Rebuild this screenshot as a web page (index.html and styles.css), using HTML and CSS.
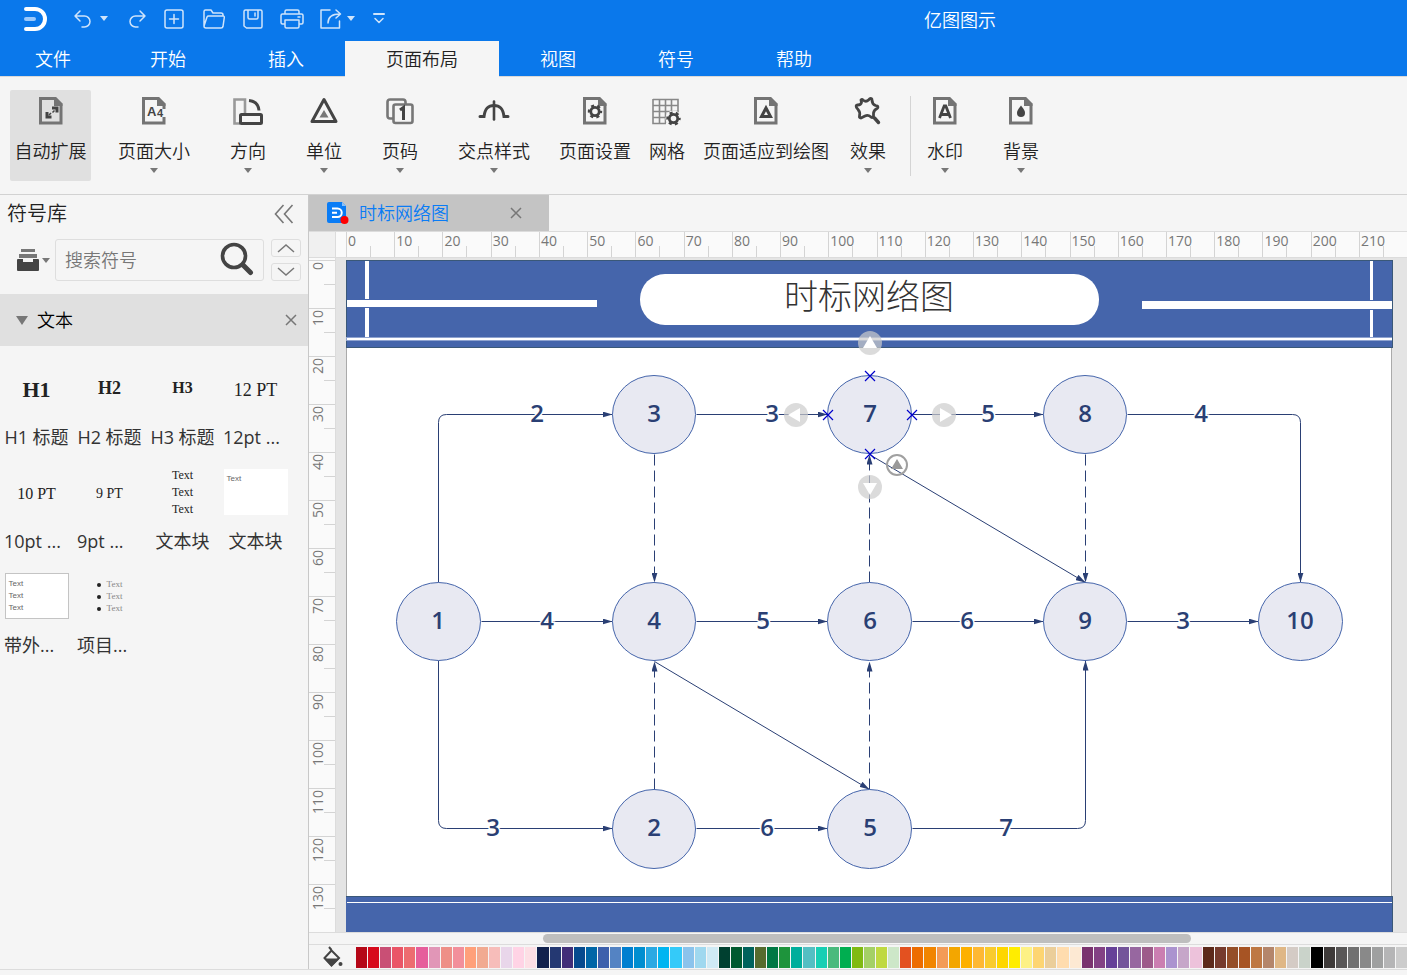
FILE: index.html
```html
<!DOCTYPE html>
<html lang="zh-CN">
<head>
    <meta charset="UTF-8">
    <meta name="viewport" content="width=device-width, initial-scale=1.0">
    <title>亿图图示</title>
    <link rel="stylesheet" href="styles.css">
</head>
<body>
    <header class="titlebar">
        <div class="quickbar">
            <svg class="logo" width="24" height="26" viewBox="0 0 24 26" fill="none" stroke-linecap="round">
                <path d="M2 3h9a10 10 0 0 1 0 20H2" stroke="#fff" stroke-width="4"/>
                <path d="M2 13h8" stroke="#9cc9fb" stroke-width="4"/>
            </svg>
            <button class="quick undo" aria-label="撤销"><svg width="20" height="22" viewBox="0 0 20 22"><path d="M7 3 2 8l5 5M2 8h9.500a5.500 5.500 0 0 1 0 11H9"/></svg></button>
            <button class="quick drop" aria-label="撤销列表"><i class="caret"></i></button>
            <button class="quick redo" aria-label="重做"><svg width="20" height="22" viewBox="0 0 20 22"><path d="M13 3l5 5-5 5M18 8H8.500a5.500 5.500 0 0 0 0 11H11"/></svg></button>
            <button class="quick new" aria-label="新建"><svg width="22" height="22" viewBox="0 0 22 22"><rect x="2" y="2" width="18" height="18" rx="2"/><path d="M11 6.500v9M6.500 11h9"/></svg></button>
            <button class="quick open" aria-label="打开"><svg width="24" height="22" viewBox="0 0 24 22"><path d="M2 18V3.500Q2 2 3.500 2H9l2 3h8q2 0 2 2v1M2 18 5 9q.5-1 1.500-1H21q1.500 0 1.300 1.500L21 18.500Q20.700 20 19 20H4q-2 0-2-2z"/></svg></button>
            <button class="quick save" aria-label="保存"><svg width="22" height="22" viewBox="0 0 22 22"><path d="M3.500 2h15Q20 2 20 3.500v15q0 1.500-1.500 1.500h-14L2 18V3.500Q2 2 3.500 2zM6 2v7.500q0 1.500 1.500 1.500h7q1.500 0 1.500-1.500V2M13 5v3"/></svg></button>
            <button class="quick print" aria-label="打印"><svg width="26" height="22" viewBox="0 0 26 22"><path d="M6 6V3.500Q6 2 7.500 2h11Q20 2 20 3.500V6M6 16H3.500Q2 16 2 14.500v-7Q2 6 3.500 6h19Q24 6 24 7.500v7q0 1.500-1.500 1.500H20M6 12h14v6.500q0 1.500-1.500 1.500h-11Q6 20 6 18.500zM19 9h2"/></svg></button>
            <button class="quick export" aria-label="导出"><svg width="22" height="22" viewBox="0 0 22 22"><path d="M10 2H1v18h18.500v-7M8 15c0-6 4-9 12-9M16 2l4.500 4L16 10"/></svg></button>
            <button class="quick drop" aria-label="导出列表"><i class="caret"></i></button>
            <button class="quick more" aria-label="更多"><svg width="12" height="14" viewBox="0 0 12 14"><path d="M1 2h10" stroke-width="2"/><path d="M2 6.500l4 4 4-4"/></svg></button>
        </div>
        <h1 class="app-title">亿图图示</h1>
    </header>

    <nav class="tabs">
        <a class="tab first" href="#">文件</a>
        <a class="tab" href="#">开始</a>
        <a class="tab" href="#">插入</a>
        <a class="tab active" href="#">页面布局</a>
        <a class="tab" href="#">视图</a>
        <a class="tab" href="#">符号</a>
        <a class="tab" href="#">帮助</a>
    </nav>

    <!-- shared shapes for the ribbon icons -->
    <svg class="defs" width="0" height="0">
        <defs>
            <g id="sheet">
                <path d="M5.500 3.500H20l6 6v18.500H5.500z" fill="none" stroke="#747474" stroke-width="3"/>
                <path d="M19 2h2l6.500 6.500V11H19z" fill="#747474"/>
            </g>
            <g id="gear" fill="none" stroke="#444">
                <circle r="4.200" stroke-width="2.800"/>
                <circle r="6" stroke-width="2.400" stroke-dasharray="3 3.280" stroke-dashoffset="1.500"/>
            </g>
        </defs>
    </svg>

    <div class="ribbon">
        <button class="tool selected">
            <svg width="32" height="32" viewBox="0 0 32 32"><use href="#sheet"/><path d="M17 13h5v4.500M12 17v5h4.500" fill="none" stroke="#444" stroke-width="3"/><path d="M19.500 15.500l-2 2M14 20l2-2" stroke="#444" stroke-width="1.500"/></svg>
            <span>自动扩展</span>
        </button>
        <button class="tool drop">
            <svg width="32" height="32" viewBox="0 0 32 32"><use href="#sheet"/><rect x="23" y="14" width="5" height="8" fill="#f5f5f5"/><text class="icon-text" x="9" y="21">A</text><text class="icon-text small" x="19" y="22">4</text></svg>
            <span>页面大小</span><i class="caret"></i>
        </button>
        <button class="tool drop">
            <svg width="32" height="32" viewBox="0 0 32 32" fill="none"><path d="M8 28.500H2.500v-24H13V19" stroke="#999" stroke-width="2.600"/><rect x="8.500" y="19.500" width="21" height="9" stroke="#444" stroke-width="3" rx="1"/><path d="M17 5.500c6 .5 9.500 4 10 10" stroke="#444" stroke-width="3"/></svg>
            <span>方向</span><i class="caret"></i>
        </button>
        <button class="tool drop">
            <svg width="32" height="32" viewBox="0 0 32 32"><path d="M16 4.500 28 26.500H4z" fill="none" stroke="#444" stroke-width="3" stroke-linejoin="round"/><path d="M16 15l4.500 7.500h-9z" fill="#777"/></svg>
            <span>单位</span><i class="caret"></i>
        </button>
        <button class="tool drop">
            <svg width="32" height="32" viewBox="0 0 32 32" fill="none" stroke="#777" stroke-width="2.600"><path d="M9 23.500H6q-2.500 0-2.500-2.500V7Q3.500 4.500 6 4.500h13q2.500 0 2.500 2.500v2"/><rect x="9.500" y="9.500" width="19" height="18.500" rx="2"/><path d="M16 15l3.500-2.500V25" stroke="#444" stroke-width="3"/></svg>
            <span>页码</span><i class="caret"></i>
        </button>
        <button class="tool drop">
            <svg width="32" height="32" viewBox="0 0 32 32" fill="none" stroke="#444" stroke-width="3" stroke-linecap="round"><path d="M2 21.500h4c1-8 4-11 10-11s9 3 10 11h4"/><path d="M16 6.500v18" stroke-width="2.600"/></svg>
            <span>交点样式</span><i class="caret"></i>
        </button>
        <button class="tool">
            <svg width="32" height="32" viewBox="0 0 32 32"><use href="#sheet"/><use href="#gear" x="16" y="16.500"/></svg>
            <span>页面设置</span>
        </button>
        <button class="tool">
            <svg width="32" height="32" viewBox="0 0 32 32"><path d="M2 4.500h25v14M2 4v24.500h13M2 10.500h25M2 16.500h25M2 22.500h13M8.500 4v24M14.500 4v24M20.500 4v13" fill="none" stroke="#888" stroke-width="1.600"/><circle cx="22.500" cy="23.500" r="8" fill="#f5f5f5"/><use href="#gear" x="22.500" y="23.500"/></svg>
            <span>网格</span>
        </button>
        <button class="tool">
            <svg width="32" height="32" viewBox="0 0 32 32"><use href="#sheet"/><path d="M16 13l4.500 8.500h-9z" fill="none" stroke="#444" stroke-width="3"/></svg>
            <span>页面适应到绘图</span>
        </button>
        <button class="tool drop narrow">
            <svg width="32" height="32" viewBox="0 0 32 32" fill="none" stroke="#444" stroke-width="2.800" stroke-linejoin="round" stroke-linecap="round"><path d="M9 5q1-1 2 0 3 2.500 5.500 0L18 3.500q2-.5 2 1.500 0 4 3.500 5.500l2 .500q1 1.500-.5 2.500-3 1.500-3.500 4.500v3.500q-1 1.500-2.500.5-3-2.500-6-1l-4 2q-2 0-1.500-2 1-4-1.500-6.500l-1.500-2Q3.500 10 5.500 10 9 10 9.500 7.500z"/><path d="M22.500 23l4 4.500" stroke-width="3.400"/></svg>
            <span>效果</span><i class="caret"></i>
        </button>
        <div class="separator"></div>
        <div class="tool-group">
            <button class="tool drop narrow">
                <svg width="32" height="32" viewBox="0 0 32 32"><use href="#sheet"/><path d="M10.500 23l4.700-12h1.600l4.700 12M12.500 19.500h7" fill="none" stroke="#444" stroke-width="2.800"/></svg>
                <span>水印</span><i class="caret"></i>
            </button>
            <button class="tool drop narrow">
                <svg width="32" height="32" viewBox="0 0 32 32"><use href="#sheet"/><path d="M16 10.500c3 4 4 5.500 4 7.500a4 4 0 0 1-8 0c0-2 1-3.500 4-7.500z" fill="#444"/></svg>
                <span>背景</span><i class="caret"></i>
            </button>
        </div>
    </div>

    <div class="workspace">
        <aside class="sidebar">
            <div class="sidebar-head">
                <h2>符号库</h2>
                <button aria-label="收起"><svg width="20" height="20" viewBox="0 0 20 20" fill="none" stroke="#777" stroke-width="1.600"><path d="M9.500 1 1.500 10l8 9M18.500 1l-8 9 8 9"/></svg></button>
            </div>
            <div class="search-row">
                <button class="library" aria-label="符号库列表">
                    <svg width="22" height="22" viewBox="0 0 22 22"><path d="M4 0h14v3H4zM2 5h18v4H2z" fill="#777"/><path d="M1 10h5v3h10v-3h5q1 0 1 1v10q0 1-1 1H1q-1 0-1-1V11q0-1 1-1z" fill="#444"/></svg>
                    <i class="caret"></i>
                </button>
                <div class="search">
                    <input type="text" placeholder="搜索符号" aria-label="搜索符号">
                    <button aria-label="搜索"><svg width="34" height="36" viewBox="0 0 34 36" fill="none" stroke="#444" stroke-linecap="round"><circle cx="14" cy="14" r="11.500" stroke-width="3.600"/><path d="M23 23l7.500 7.500" stroke-width="5"/></svg></button>
                </div>
                <div class="stepper">
                    <button aria-label="上一个"><svg width="18" height="10" viewBox="0 0 18 10"><path d="M1 9l8-7 8 7"/></svg></button>
                    <button aria-label="下一个"><svg width="18" height="10" viewBox="0 0 18 10"><path d="M1 1l8 7 8-7"/></svg></button>
                </div>
            </div>
            <div class="section">
                <i class="triangle"></i>
                <h3>文本</h3>
                <button class="close" aria-label="关闭文本"><svg width="12" height="12" viewBox="0 0 12 12"><path d="M1 1l10 10M11 1 1 11"/></svg></button>
            </div>
            <div class="symbols">
                <button class="symbol"><span class="thumb h-1">H1</span><span class="name">H1 标题</span></button>
                <button class="symbol"><span class="thumb h-2">H2</span><span class="name">H2 标题</span></button>
                <button class="symbol"><span class="thumb h-3">H3</span><span class="name">H3 标题</span></button>
                <button class="symbol cut"><span class="thumb pt-12">12 PT</span><span class="name">12pt ...</span></button>
                <button class="symbol cut"><span class="thumb pt-10">10 PT</span><span class="name">10pt ...</span></button>
                <button class="symbol cut"><span class="thumb pt-9">9 PT</span><span class="name">9pt ...</span></button>
                <button class="symbol"><span class="thumb lines"><span>Text</span><span>Text</span><span>Text</span></span><span class="name">文本块</span></button>
                <button class="symbol"><span class="thumb box">Text</span><span class="name">文本块</span></button>
                <button class="symbol cut"><span class="thumb box framed">Text<br>Text<br>Text</span><span class="name">带外...</span></button>
                <button class="symbol cut"><span class="thumb bullets"><span>Text</span><span>Text</span><span>Text</span></span><span class="name">项目...</span></button>
            </div>
        </aside>

        <main class="editor">
            <div class="doc-tabs">
                <div class="doc-tab">
                    <svg width="23" height="22" viewBox="0 0 23 22"><path d="M2 0h13l4 4v15q0 2-2 2H2q-2 0-2-2V2q0-2 2-2z" fill="#0a7cf5"/><path d="M15 0v4h4z" fill="#8cc2fa"/><path d="M5 6.500h5.500a4 4 0 0 1 0 8.500H5M5 10.800h5" fill="none" stroke="#fff" stroke-width="2"/><circle cx="17.500" cy="18" r="4" fill="#f00"/></svg>
                    <a href="#">时标网络图</a>
                    <button class="close" aria-label="关闭"><svg width="12" height="12" viewBox="0 0 12 12"><path d="M1 1l10 10M11 1 1 11"/></svg></button>
                </div>
            </div>
            <div class="ruler-h">
                <div class="corner"></div>
                <div class="scale" id="scaleX"></div>
            </div>
            <div class="stage">
                <div class="ruler-v" id="scaleY"></div>
                <div class="canvas">
                    <svg class="page" width="1047" height="672" viewBox="0 0 1047 672">
                        <defs>
                            <marker id="arrow" viewBox="0 0 10 6" refX="10" refY="3" markerWidth="10" markerHeight="6" markerUnits="userSpaceOnUse" orient="auto">
                                <path d="M0 0l10 3-10 3z" fill="#2a3f74"/>
                            </marker>
                            <path id="cross" d="M-5-5 5 5M5-5-5 5"/>
                        </defs>
                        <rect class="paper" x="0.500" y="0.500" width="1045" height="672"/>

                        <g class="banner">
                            <rect class="blue" width="1047" height="88"/>
                            <rect class="outline" x="0.500" y="0.500" width="1046" height="87"/>
                            <path d="M19 1h4v38h-4zM19 48h4v29h-4zM1 40h250v7H1z"/>
                            <path d="M1024 1h3v39h-3zM1024 50h3v27h-3zM796 41h250v8H796z"/>
                            <rect class="pale" y="77" width="1046" height="4"/>
                            <rect y="78" x="1" width="1045" height="2"/>
                            <rect x="294" y="14" width="459" height="51" rx="25"/>
                            <rect class="blue" y="636" width="1047" height="36"/>
                            <path class="outline" d="M0 636.500h1046.500V672"/>
                            <rect y="642" x="1" width="1045" height="1"/>
                        </g>
                        <text class="page-title" x="523" y="49">时标网络图</text>

                        <g class="edges" transform="translate(0.500 0.500)">
                            <path d="M92 322V162q0-8 8-8h166"/>
                            <path d="M350 154h131"/>
                            <path d="M566 154h131"/>
                            <path d="M781 154h165q8 0 8 8v160"/>
                            <path d="M135 361h131"/>
                            <path d="M350 361h131"/>
                            <path d="M566 361h131"/>
                            <path d="M781 361h131"/>
                            <path d="M92 400v160q0 8 8 8h166"/>
                            <path d="M350 568h131"/>
                            <path d="M566 568h165q8 0 8-8V400"/>
                            <path d="M308 401l215 128"/>
                            <path d="M523 194l216 128"/>
                            <g class="dashed">
                                <path d="M308 194v128"/>
                                <path d="M308 529V401"/>
                                <path d="M523 322V194"/>
                                <path d="M523 529V401"/>
                                <path d="M739 194v128"/>
                            </g>
                        </g>

                        <g class="nodes">
                            <ellipse cx="92.500" cy="361.500" rx="42" ry="39"/>
                            <ellipse cx="308" cy="154.500" rx="41.500" ry="39"/>
                            <ellipse cx="523.500" cy="154.500" rx="42" ry="39"/>
                            <ellipse cx="739" cy="154.500" rx="41.500" ry="39"/>
                            <ellipse cx="308" cy="361.500" rx="41.500" ry="39"/>
                            <ellipse cx="523.500" cy="361.500" rx="42" ry="39"/>
                            <ellipse cx="739" cy="361.500" rx="41.500" ry="39"/>
                            <ellipse cx="954.500" cy="361.500" rx="42" ry="39"/>
                            <ellipse cx="308" cy="569" rx="41.500" ry="39.500"/>
                            <ellipse cx="523.500" cy="569" rx="42" ry="39.500"/>
                        </g>

                        <g class="numbers">
                            <text x="92" y="369">1</text>
                            <text x="308" y="162">3</text>
                            <text x="524" y="162">7</text>
                            <text x="739" y="162">8</text>
                            <text x="308" y="369">4</text>
                            <text x="524" y="369">6</text>
                            <text x="739" y="369">9</text>
                            <text x="954" y="369">10</text>
                            <text x="308" y="576">2</text>
                            <text x="524" y="576">5</text>
                        </g>
                        <g class="numbers weights">
                            <text x="191" y="162">2</text>
                            <text x="426" y="162">3</text>
                            <text x="642" y="162">5</text>
                            <text x="855" y="162">4</text>
                            <text x="201" y="369">4</text>
                            <text x="417" y="369">5</text>
                            <text x="621" y="369">6</text>
                            <text x="837" y="369">3</text>
                            <text x="147" y="576">3</text>
                            <text x="421" y="576">6</text>
                            <text x="660" y="576">7</text>
                        </g>

                        <!-- selection handles of node 7 -->
                        <g class="handles">
                            <circle cx="524" cy="83" r="12"/><path d="M524 76l7 12h-14z"/>
                            <circle cx="450" cy="155" r="12"/><path d="M442 155l12-7v14z"/>
                            <circle cx="598" cy="155" r="12"/><path d="M606 155l-12-7v14z"/>
                            <circle cx="524" cy="227" r="12"/><path d="M524 235l-7-12h14z"/>
                        </g>
                        <g class="rotate">
                            <circle cx="551" cy="205" r="10"/>
                            <path d="M551 199l6 10h-12z"/>
                        </g>
                        <g class="crosses">
                            <use href="#cross" x="524" y="116"/>
                            <use href="#cross" x="482" y="155"/>
                            <use href="#cross" x="566" y="155"/>
                            <use href="#cross" x="524" y="194"/>
                        </g>
                    </svg>
                </div>
            </div>
            <div class="scrollbar"><div class="scroll-thumb"></div></div>
            <div class="palette">
                <button class="bucket" aria-label="填充"><svg width="20" height="22" viewBox="0 0 20 22"><path d="M6 1l2.500 3" stroke="#444" stroke-width="2"/><path d="M8.500 4.500l7.500 7.500-7.500 7.500L1.500 12z" fill="none" stroke="#444" stroke-width="2"/><path d="M1 12.500h15.500l-8 8z" fill="#444"/><circle cx="17.500" cy="18" r="2" fill="#444"/></svg></button>
                <div class="swatches" id="swatches"></div>
            </div>
        </main>
    </div>
    <footer class="statusbar"></footer>

    <script src="script.js"></script>
</body>
</html>
```
FILE: styles.css
```css
* {
    box-sizing: border-box;
}
body {
    margin: 0;
    height: 100vh;
    display: flex;
    flex-direction: column;
    overflow: hidden;
    background-color: #f5f5f5;
    color: #222;
    font-family: "Open Sans", "Noto Sans CJK SC", sans-serif;
    font-size: 18px;
    font-weight: 350;
    line-height: 24px;
}
h1, h2, h3 {
    margin: 0;
    font-size: 18px;
    font-weight: 350;
}
button {
    padding: 0;
    border: none;
    background: none;
    color: inherit;
    font: inherit;
    cursor: pointer;
}
a {
    color: inherit;
    text-decoration: none;
}
svg {
    display: block;
    flex-shrink: 0;
}
.defs {
    position: absolute;
}
.caret {
    display: block;
    border: 4px solid transparent;
    border-top: 5px solid #777;
    border-bottom: none;
}

/* title bar */
.titlebar {
    display: flex;
    height: 41px;
    flex-shrink: 0;
    background-color: #0a78eb;
    color: #fff;
}
.quickbar {
    display: flex;
    align-items: center;
    flex: 0 0 513px;
    height: 37px;
    padding-left: 24px;
}
.quick svg {
    fill: none;
    stroke: #cfe4fb;
    stroke-width: 1.500;
    stroke-linejoin: round;
    stroke-linecap: round;
}
.quick .caret {
    border-top-color: #cfe4fb;
}
.undo {
    margin-left: 25px;
}
.drop {
    margin-left: 7px;
}
.redo {
    margin-left: 19px;
}
.new {
    margin-left: 16px;
}
.open {
    margin-left: 17px;
}
.save {
    margin-left: 16px;
}
.print {
    margin-left: 15px;
}
.export {
    margin-left: 15px;
}
.quick.drop + .more {
    margin-left: 18px;
}
.export + .drop {
    margin-left: 5px;
}
.app-title {
    flex: 1;
    text-align: center;
    line-height: 40px;
}

/* menu tabs */
.tabs {
    display: flex;
    height: 36px;
    flex-shrink: 0;
    background-color: #0a78eb;
    border-bottom: 1px solid #d9d9d9;
    color: #fff;
}
.tab {
    height: 36px;
    padding: 0 41px;
    line-height: 36px;
}
.tab.first {
    padding: 0 38px 0 35px;
}
.tab.active {
    background-color: #f5f5f5;
    color: #222;
}

/* ribbon */
.ribbon {
    display: flex;
    height: 118px;
    flex-shrink: 0;
    padding: 13px 10px;
    border-bottom: 1px solid #d2d2d2;
}
.tool {
    display: flex;
    flex-direction: column;
    align-items: center;
    height: 91px;
    margin: 0;
    padding: 5px 9px 0;
    white-space: nowrap;
}
.tool span {
    margin-top: 12px;
}
.tool .caret {
    margin-top: 5px;
}
.tool.selected {
    width: 81px;
    margin-right: 7px;
    padding: 5px 0 0;
    background-color: #e0e0e0;
    border-radius: 2px;
}
.tool.drop {
    padding: 5px 20px 0;
}
.tool.narrow {
    padding: 5px 12px 0;
}
.separator {
    width: 1px;
    height: 80px;
    margin: 6px 4px 0 12px;
    background-color: #d4d4d4;
}
.tool-group {
    display: flex;
    gap: 16px;
}
.icon-text {
    font: bold 13px "Liberation Sans", sans-serif;
    fill: #444;
}
.icon-text.small {
    font-size: 11px;
}

/* symbol library */
.workspace {
    display: flex;
    flex: 1;
    min-height: 0;
}
.sidebar {
    flex: 0 0 309px;
    min-width: 0;
    border-right: 1px solid #c8c8c8;
}
.sidebar-head {
    display: flex;
    align-items: center;
    justify-content: space-between;
    height: 38px;
    padding: 0 14px 0 7px;
}
.sidebar-head h2 {
    font-size: 20px;
}
.search-row {
    display: flex;
    align-items: center;
    height: 54px;
    padding: 0 7px 0 17px;
}
.library {
    display: flex;
    align-items: center;
    gap: 3px;
    width: 38px;
}
.search {
    display: flex;
    align-items: center;
    flex: 1;
    min-width: 0;
    height: 42px;
    padding: 0 9px;
    border: 1px solid #dedede;
    border-radius: 3px;
}
.search input {
    flex: 1;
    min-width: 0;
    padding: 0;
    border: none;
    outline: none;
    background: none;
    font: inherit;
}
.search input::placeholder {
    color: #777;
}
.stepper {
    display: flex;
    flex-direction: column;
    gap: 6px;
    margin-left: 7px;
}
.stepper button {
    display: flex;
    align-items: center;
    justify-content: center;
    width: 30px;
    height: 18px;
    border: 1px solid #dedede;
    border-radius: 3px;
}
.stepper svg,
.close svg {
    fill: none;
    stroke: #777;
    stroke-width: 1.500;
}
.section {
    display: flex;
    align-items: center;
    height: 52px;
    margin-top: 7px;
    padding: 0 11px 0 16px;
    background-color: #e0e0e0;
    color: #000;
}
.section h3 {
    flex: 1;
    margin-left: 9px;
}
.triangle {
    border: 6px solid transparent;
    border-top: 9px solid #777;
    border-bottom: none;
}
.symbols {
    display: grid;
    grid-template-columns: repeat(4, 73px);
    row-gap: 20px;
    padding-top: 19px;
}
.symbol {
    display: flex;
    flex-direction: column;
    align-items: center;
    gap: 14px;
    white-space: nowrap;
}
.name {
    color: #333;
    font-weight: 400;
}
.cut .name {
    align-self: flex-start;
    margin-left: 4px;
}
.thumb {
    display: flex;
    align-items: center;
    justify-content: center;
    height: 46px;
    color: #222;
    font-family: "Liberation Serif", serif;
    font-weight: 400;
}
.h-1,
.pt-12,
.pt-10,
.pt-9 {
    padding-top: 4px;
}
.h-1 {
    font-size: 22px;
    font-weight: 700;
}
.h-2 {
    font-size: 18px;
    font-weight: 700;
}
.h-3 {
    font-size: 16px;
    font-weight: 700;
}
.pt-12 {
    font-size: 18px;
}
.pt-10 {
    font-size: 16px;
}
.pt-9 {
    font-size: 14px;
}
.lines {
    flex-direction: column;
    font-size: 12px;
    line-height: 17px;
}
.box {
    display: block;
    width: 64px;
    padding: 4px 3px;
    background-color: #fff;
    color: #666;
    font-family: "Liberation Sans", sans-serif;
    font-size: 8px;
    line-height: 12px;
    text-align: left;
}
.framed {
    border: 1px solid #c4c4c4;
}
.bullets {
    flex-direction: column;
    color: #888;
    font-size: 9px;
    line-height: 12px;
}
.bullets span::before {
    content: "";
    display: inline-block;
    width: 4px;
    height: 4px;
    margin-right: 6px;
    border-radius: 50%;
    background-color: #222;
    vertical-align: middle;
}

/* editor */
.editor {
    display: flex;
    flex-direction: column;
    flex: 1;
    min-width: 0;
}
.doc-tabs {
    height: 36px;
}
.doc-tab {
    display: flex;
    align-items: center;
    width: 240px;
    height: 36px;
    padding: 0 27px 0 18px;
    background-color: #c4c4c4;
}
.doc-tab a {
    flex: 1;
    margin-left: 9px;
    color: #0a7cf5;
}
.ruler-h {
    display: flex;
    height: 27px;
    border-top: 1px solid #dcdcdc;
    border-bottom: 1px solid #dcdcdc;
    background-color: #fafafa;
}
.corner {
    width: 27px;
    background-color: #f0f0f0;
    border-right: 1px solid #dcdcdc;
}
.scale {
    display: flex;
    flex: 1;
    padding-left: 10px;
}
.scale span {
    flex: 1 1 0;
    min-width: 0;
    padding-left: 1px;
    border-left: 1px solid #d4d4d4;
    background: linear-gradient(#d4d4d4, #d4d4d4) 23px 100% / 1px 11px no-repeat;
    color: #777;
    font-size: 14px;
    font-weight: 400;
    line-height: 18px;
}
.stage {
    display: flex;
    flex: 1;
    min-height: 0;
}
.ruler-v {
    display: flex;
    flex-direction: column;
    width: 27px;
    padding-top: 2px;
    border-right: 1px solid #dcdcdc;
    background-color: #fafafa;
}
.ruler-v div {
    flex: 1;
    padding-top: 1px;
    border-top: 1px solid #d4d4d4;
    background: linear-gradient(#d4d4d4, #d4d4d4) 100% 23px / 11px 1px no-repeat;
}
.ruler-v span {
    display: block;
    width: 18px;
    writing-mode: vertical-rl;
    transform: rotate(180deg);
    text-align: right;
    color: #777;
    font-size: 14px;
    font-weight: 400;
    line-height: 18px;
}
.canvas {
    flex: 1;
    min-width: 0;
    overflow: hidden;
    padding: 2px 0 0 10px;
    background-color: #e4e4e4;
}

/* diagram */
.paper {
    fill: #fff;
    stroke: #aaa;
}
.banner {
    fill: #fff;
}
.banner .blue {
    fill: #4565ab;
}
.banner .pale {
    fill: #8fa3cf;
}
.banner .outline {
    fill: none;
    stroke: #3a5878;
}
.page-title {
    fill: #333;
    font-family: "Noto Sans CJK SC", sans-serif;
    font-size: 34px;
    font-weight: 300;
    text-anchor: middle;
}
.edges {
    fill: none;
    stroke: #2a3f74;
}
.edges path {
    marker-end: url(#arrow);
}
.dashed {
    stroke-dasharray: 11 5;
}
.nodes {
    fill: #e8e9f2;
    stroke: #4565ab;
}
.numbers {
    fill: #2a3f74;
    font-size: 24px;
    font-weight: 600;
    text-anchor: middle;
}
.weights {
    stroke: #fff;
    stroke-width: 3;
    paint-order: stroke;
}
.handles circle {
    fill: #ccc;
    fill-opacity: 0.7;
}
.handles path {
    fill: #fff;
}
.rotate circle {
    fill: none;
    stroke: #a0a0a0;
    stroke-width: 2;
}
.rotate path {
    fill: #999;
}
.crosses {
    stroke: #00c;
    stroke-width: 1.200;
}

/* bottom bars */
.scrollbar {
    height: 13px;
    padding-top: 1px;
    border-top: 1px solid #dcdcdc;
    border-bottom: 1px solid #dcdcdc;
}
.scroll-thumb {
    width: 59%;
    height: 9px;
    margin-left: 234px;
    border-radius: 5px;
    background-color: #bebebe;
}
.palette {
    display: flex;
    align-items: center;
    height: 24px;
}
.bucket {
    width: 47px;
    padding-left: 14px;
}
.swatches {
    display: flex;
    flex: 1;
    gap: 1px;
}
.swatches button {
    flex: 1;
    height: 21px;
}
.statusbar {
    height: 6px;
    flex-shrink: 0;
    border-top: 1px solid #dcdcdc;
}
```
FILE: script.js
```js
const scaleX = document.getElementById('scaleX');
for (let i = 0; i <= 210; i += 10) {
    const mark = document.createElement('span');
    mark.textContent = i;
    scaleX.appendChild(mark);
}

const scaleY = document.getElementById('scaleY');
for (let i = 0; i <= 130; i += 10) {
    const mark = document.createElement('div');
    const label = document.createElement('span');
    label.textContent = i;
    mark.appendChild(label);
    scaleY.appendChild(mark);
}

const colors = [
    // reds
    '#b50717', '#d70a1c', '#c94f75', '#ea5567', '#ed6c70', '#e65e9b', '#e196b7', '#ee8f87',
    '#f28f9b', '#ffa07a', '#f1aa91', '#f7bdba', '#e9d6ea', '#ffd3e5', '#fddfe5',
    // blues
    '#11214d', '#243872', '#412e78', '#064a8e', '#0066a7', '#3d60ac', '#5483c3', '#007fd0',
    '#008ed0', '#2ba9e3', '#00b5f1', '#34caf9', '#8bc3ec', '#9fd8ef', '#cfeaf5',
    // greens
    '#004030', '#00592f', '#00625c', '#566b2e', '#007844', '#1e943c', '#00ae9c', '#54bfc3',
    '#17cfb4', '#4aba7d', '#00ae50', '#80ba12', '#a4d066', '#bfd941', '#cde7c8',
    // oranges and yellows
    '#e35120', '#ed6c00', '#f18500', '#f39b56', '#f3a600', '#fdb000', '#feb833', '#f9cb2e',
    '#fed600', '#ffed00', '#fdf185', '#fdd572', '#ebce9a', '#ffdcae', '#fde9d3',
    // purples
    '#7a336f', '#834184', '#664098', '#74549a', '#9767a0', '#9d5b8a', '#cb7eb1', '#ab93cf',
    '#c6a6c9', '#edc2db',
    // browns
    '#5c291a', '#763b2d', '#944e28', '#a75424', '#be7843', '#b4866b', '#dfb786', '#d4cbc5',
    '#cad3ca',
    // greys
    '#000000', '#3e3a39', '#595757', '#717171', '#898989', '#9fa0a0', '#b5b5b6', '#cccccc'
];

const swatches = document.getElementById('swatches');
colors.forEach(color => {
    const swatch = document.createElement('button');
    swatch.style.backgroundColor = color;
    swatch.setAttribute('aria-label', color);
    swatches.appendChild(swatch);
});
```
